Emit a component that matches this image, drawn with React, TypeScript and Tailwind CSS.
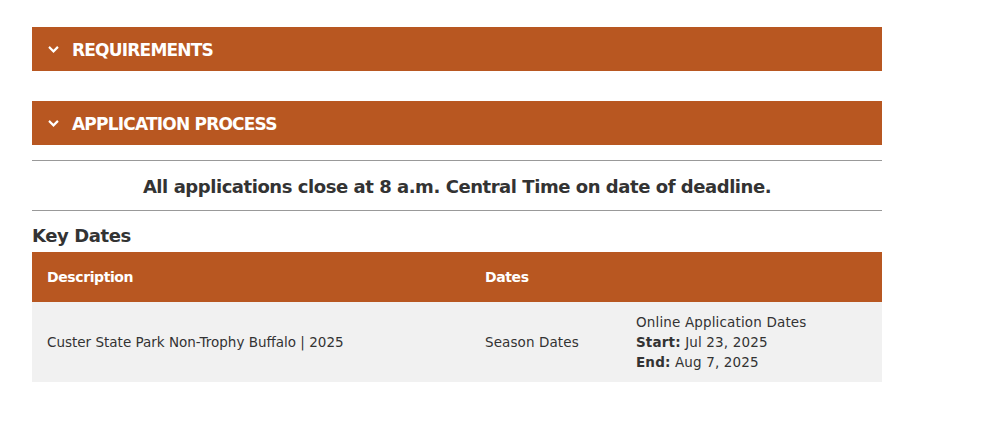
import React from "react";

const font = { fontFamily: '"DejaVu Sans", "Liberation Sans", sans-serif' };

function Bar({ title }: { title: string }) {
  return (
    <div className="flex h-[44px] items-center bg-[#b85721] pl-[16px] text-white">
      <svg width="11" height="11" viewBox="0 0 12 12" className="mr-[13px]">
        <path d="M2 4 L6 8 L10 4" stroke="white" strokeWidth="2.4" fill="none" strokeLinecap="square" />
      </svg>
      <span className="pt-[3px] text-[17px] font-bold tracking-[-0.8px]">{title}</span>
    </div>
  );
}

export default function App() {
  return (
    <div className="min-h-[431px] bg-white text-[#333]" style={font}>
      <div className="ml-[32px] w-[850px] pt-[27px]">
        <Bar title="REQUIREMENTS" />
        <div className="h-[30px]" />
        <Bar title="APPLICATION PROCESS" />
        <div className="mt-[15px] border-t border-[#999]" />
        <div className="flex h-[49px] items-center justify-center pt-[2px] text-[18px] font-bold tracking-[-0.45px]">
          All applications close at 8 a.m. Central Time on date of deadline.
        </div>
        <div className="border-t border-[#999]" />
        <div className="pt-[13px] pb-[4px] text-[18px] font-semibold leading-[24px] tracking-[-0.4px]">Key Dates</div>
        <div className="grid grid-cols-[438px_151px_261px]">
          <div className="flex h-[50px] items-center bg-[#b85721] pl-[15px] text-[14px] font-bold text-white tracking-[-0.4px]">Description</div>
          <div className="col-span-2 flex h-[50px] items-center bg-[#b85721] pl-[15px] text-[14px] font-bold text-white tracking-[-0.4px]">Dates</div>
          <div className="flex h-[80px] items-center bg-[#f1f1f1] pl-[15px] text-[13.5px] tracking-[0px]">
            Custer State Park Non-Trophy Buffalo&nbsp;|&nbsp;2025
          </div>
          <div className="flex h-[80px] items-center bg-[#f1f1f1] pl-[15px] text-[13.5px] tracking-[0.1px]">Season Dates</div>
          <div className="flex h-[80px] flex-col justify-center bg-[#f1f1f1] pl-[15px] text-[13.5px] leading-[20px] tracking-[0.15px]">
            <div>Online Application Dates</div>
            <div><span className="font-bold">Start:</span> Jul 23, 2025</div>
            <div><span className="font-bold">End:</span> Aug 7, 2025</div>
          </div>
        </div>
      </div>
    </div>
  );
}
